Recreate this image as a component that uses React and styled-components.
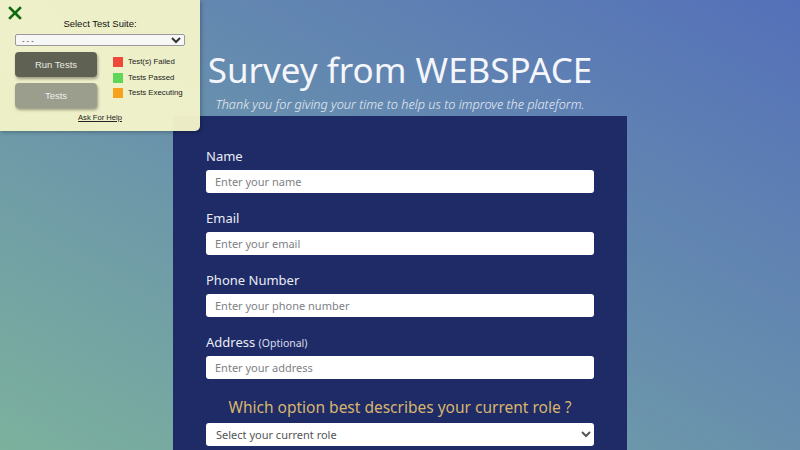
import React from "react";
import styled, { createGlobalStyle } from "styled-components";

const Global = createGlobalStyle`
  html, body { margin: 0; padding: 0; }
  body {
    width: 800px;
    height: 450px;
    overflow: hidden;
    font-family: "Open Sans", "Liberation Sans", sans-serif;
    background: linear-gradient(to top right, #7cb19d 0%, #6890ad 50%, #5470b9 100%);
  }
  * { box-sizing: border-box; }
`;

const Page = styled.div`
  position: relative;
  width: 800px;
  height: 450px;
  overflow: hidden;
`;

const Main = styled.main`
  display: flex;
  flex-direction: column;
  align-items: center;
`;

const Header = styled.header`
  display: flex;
  flex-direction: column;
  align-items: center;
  padding-top: 48px;
  height: 116px;
`;

const Title = styled.h1`
  margin: 0;
  font-family: "Noto Sans", "Open Sans", sans-serif;
  font-weight: 400;
  font-size: 35px;
  line-height: 44px;
  color: #f4f6fb;
`;

const Subtitle = styled.p`
  margin: 4px 0 0;
  font-family: "Noto Sans", "Open Sans", sans-serif;
  font-style: italic;
  font-weight: 300;
  font-size: 12.7px;
  line-height: 16px;
  color: #e8ecf4;
`;

const Form = styled.form`
  width: 454px;
  background: #1e2b67;
  padding: 31px 33px 0;
  display: flex;
  flex-direction: column;
  gap: 16px;
  height: 340px;
`;

const Field = styled.div`
  display: flex;
  flex-direction: column;
  gap: 5px;
`;

const Label = styled.label`
  display: block;
  height: 18px;
  font-family: "Noto Sans", sans-serif;
  font-size: 13px;
  line-height: 18px;
  color: #e9ecf5;
`;

const Small = styled.span`
  font-size: 10.5px;
  line-height: 10px;
  color: #d9deec;
`;

const Input = styled.input`
  width: 388px;
  height: 23px;
  border: none;
  border-radius: 3px;
  background: #fff;
  padding: 0 9px;
  font-family: "Noto Sans", sans-serif;
  font-size: 11px;
  color: #333;
  &::placeholder { color: #7d7f86; }
`;

const Question = styled.p`
  margin: 2px 0 0;
  text-align: center;
  font-family: "Noto Sans", sans-serif;
  font-size: 15.5px;
  line-height: 20px;
  color: #d7b56e;
`;

const RoleSelect = styled.select`
  width: 388px;
  height: 23px;
  margin-top: -10px;
  border: none;
  border-radius: 3px;
  background: #fff;
  padding: 0 6px;
  font-family: "Noto Sans", sans-serif;
  font-size: 11px;
  color: #555;
`;

/* test panel overlay */
const Panel = styled.div`
  position: absolute;
  left: 0;
  top: 0;
  width: 200px;
  height: 131px;
  background: rgba(242, 243, 200, 0.97);
  border-bottom-right-radius: 5px;
  box-shadow: 1px 1px 4px rgba(0, 0, 0, 0.3);
  font-family: "Liberation Sans", Arial, sans-serif;
  padding: 0 15px;
  display: flex;
  flex-direction: column;
`;

const Close = styled.div`
  position: absolute;
  left: 8px;
  top: 6px;
  width: 14px;
  height: 14px;
`;

const PanelTitle = styled.div`
  text-align: center;
  font-size: 9.5px;
  color: #111;
  margin-top: 17px;
  line-height: 13px;
`;

const SuiteSelect = styled.select`
  margin-top: 4px;
  width: 170px;
  height: 12px;
  font-size: 7.5px;
  padding: 0 2px;
  border: 1px solid #999;
  border-radius: 2px;
  background: #f7f7f7;
  color: #333;
  font-family: "Liberation Sans", Arial, sans-serif;
`;

const Controls = styled.div`
  display: flex;
  gap: 16px;
  margin-top: 6px;
`;

const Buttons = styled.div`
  display: flex;
  flex-direction: column;
  gap: 6px;
`;

const Btn = styled.button`
  width: 82px;
  height: 25px;
  border: none;
  border-radius: 4px;
  background: ${(p) => (p.$light ? "#9b9d8d" : "#5f6153")};
  color: ${(p) => (p.$light ? "#eeeeea" : "#eaeae4")};
  font-family: "Liberation Sans", Arial, sans-serif;
  font-size: 9.5px;
  box-shadow: 1px 2px 3px rgba(0, 0, 0, 0.35);
`;

const Legend = styled.ul`
  list-style: none;
  margin: 5px 0 0;
  padding: 0;
  display: flex;
  flex-direction: column;
  gap: 5.5px;
`;

const LegendItem = styled.li`
  display: flex;
  align-items: center;
  gap: 5px;
  font-size: 7.8px;
  color: #222;
  line-height: 10px;
  white-space: nowrap;
`;

const Swatch = styled.span`
  flex: none;
  width: 10px;
  height: 10px;
  background: ${(p) => p.$c};
`;

const Help = styled.a`
  margin-top: 5px;
  text-align: center;
  font-size: 7.6px;
  color: #222;
  text-decoration: underline;
`;

export default function App() {
  return (
    <Page>
      <Global />
      <Main>
        <Header>
          <Title>Survey from WEBSPACE</Title>
          <Subtitle>Thank you for giving your time to help us to improve the plateform.</Subtitle>
        </Header>
        <Form>
          <Field>
            <Label>Name</Label>
            <Input placeholder="Enter your name" />
          </Field>
          <Field>
            <Label>Email</Label>
            <Input placeholder="Enter your email" />
          </Field>
          <Field>
            <Label>Phone Number</Label>
            <Input placeholder="Enter your phone number" />
          </Field>
          <Field>
            <Label>
              Address <Small>(Optional)</Small>
            </Label>
            <Input placeholder="Enter your address" />
          </Field>
          <Question>Which option best describes your current role ?</Question>
          <RoleSelect defaultValue="">
            <option value="">Select your current role</option>
          </RoleSelect>
        </Form>
      </Main>
      <Panel>
        <Close>
          <svg width="14" height="14" viewBox="0 0 14 14">
            <path d="M2 2 L12 12 M12 2 L2 12" stroke="#106b10" strokeWidth="2.6" strokeLinecap="square" />
          </svg>
        </Close>
        <PanelTitle>Select Test Suite:</PanelTitle>
        <SuiteSelect defaultValue="">
          <option value="">- - -</option>
        </SuiteSelect>
        <Controls>
          <Buttons>
            <Btn>Run Tests</Btn>
            <Btn $light>Tests</Btn>
          </Buttons>
          <Legend>
            <LegendItem><Swatch $c="#f0473b" />Test(s) Failed</LegendItem>
            <LegendItem><Swatch $c="#5fd657" />Tests Passed</LegendItem>
            <LegendItem><Swatch $c="#f7a21c" />Tests Executing</LegendItem>
          </Legend>
        </Controls>
        <Help href="#">Ask For Help</Help>
      </Panel>
    </Page>
  );
}
